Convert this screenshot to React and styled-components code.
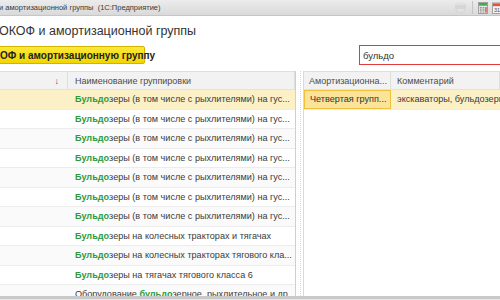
import React from "react";
import styled, { createGlobalStyle } from "styled-components";

const GlobalStyle = createGlobalStyle`
  html, body {
    margin: 0;
    padding: 0;
    width: 500px;
    height: 300px;
    overflow: hidden;
    background: #ffffff;
  }
  body {
    font-family: "Liberation Sans", Arial, sans-serif;
    color: #333;
  }
`;

const rows = [
  { rest: "зеры (в том числе с рыхлителями) на гус..." },
  { rest: "зеры (в том числе с рыхлителями) на гус..." },
  { rest: "зеры (в том числе с рыхлителями) на гус..." },
  { rest: "зеры (в том числе с рыхлителями) на гус..." },
  { rest: "зеры (в том числе с рыхлителями) на гус..." },
  { rest: "зеры (в том числе с рыхлителями) на гус..." },
  { rest: "зеры (в том числе с рыхлителями) на гус..." },
  { rest: "зеры на колесных тракторах и тягачах" },
  { rest: "зеры на колесных тракторах тягового кла..." },
  { rest: "зеры на тягачах тягового класса 6" },
  { pre: "Оборудование ", match: "бульдо", rest: "зерное, рыхлительное и др..." },
];

export default function App() {
  return (
    <>
      <GlobalStyle />
      <Window>
        <TitleBar>
          <span>и амортизационной группы&nbsp; (1С:Предприятие)</span>
          <TitleIcons>
            <svg width="13" height="11" viewBox="0 0 14 12">
              <rect x="1" y="2" width="12" height="6" rx="1" fill="#c9ccd0" />
              <rect x="3" y="0.5" width="8" height="3" fill="#dcdfe2" />
              <rect x="3" y="7" width="8" height="4" fill="#e4e6e8" stroke="#c2c5c9" strokeWidth="0.6" />
            </svg>
            <Divider />
            <svg width="10" height="12" viewBox="0 0 11 13">
              <rect x="0.5" y="0.5" width="10" height="12" fill="#e8e8e8" stroke="#9a9a9a" />
              <rect x="1" y="1" width="9" height="3" fill="#3fae49" />
              <g fill="#8a8a8a">
                <rect x="2" y="5.5" width="2" height="1.5" />
                <rect x="5" y="5.5" width="2" height="1.5" />
                <rect x="2" y="8" width="2" height="1.5" />
                <rect x="5" y="8" width="2" height="1.5" />
                <rect x="2" y="10.5" width="2" height="1" />
                <rect x="5" y="10.5" width="2" height="1" />
              </g>
              <rect x="8" y="5.5" width="1.5" height="6" fill="#d64545" />
            </svg>
            <svg width="10" height="12" viewBox="0 0 11 13">
              <rect x="0.5" y="1" width="10" height="11.5" fill="#f4f4f4" stroke="#9a9a9a" />
              <rect x="1" y="1.5" width="9" height="3" fill="#e0553a" />
              <text x="5.5" y="11" fontSize="6" textAnchor="middle" fill="#444" fontFamily="Liberation Sans, sans-serif">31</text>
            </svg>
          </TitleIcons>
        </TitleBar>

        <Form>
          <Heading>ОКОФ и амортизационной группы</Heading>
          <Toolbar>
            <PrimaryButton>ОФ и амортизационную группу</PrimaryButton>
            <SearchBox>бульдо</SearchBox>
          </Toolbar>

          <Panes>
            <LeftGrid>
              <HeaderRow>
                <HeadCell $w="68px" $align="flex-end">
                  <SortArrow>↓</SortArrow>
                </HeadCell>
                <HeadCell $grow>Наименование группировки</HeadCell>
              </HeaderRow>
              {rows.map((r, i) => (
                <Row key={i} $selected={i === 0} $alt={i % 2 === 1}>
                  <Cell $w="68px" />
                  <Cell $grow>
                    {r.pre}
                    <Match>{r.match || "Бульдо"}</Match>
                    {r.rest}
                  </Cell>
                </Row>
              ))}
            </LeftGrid>

            <Splitter />

            <RightGrid>
              <HeaderRow>
                <HeadCell $w="87px" $pad="5px">Амортизационна...</HeadCell>
                <HeadCell $grow $pad="6px">Комментарий</HeadCell>
              </HeaderRow>
              <Row $selected>
                <CurrentCell>Четвертая групп...</CurrentCell>
                <Cell $grow $pad="6px">экскаваторы, бульдозеры, грейдеры</Cell>
              </Row>
            </RightGrid>
          </Panes>
        </Form>
        <BottomEdge />
      </Window>
    </>
  );
}

const Window = styled.div`
  width: 500px;
  height: 300px;
  display: flex;
  flex-direction: column;
  overflow: hidden;
`;

const TitleBar = styled.div`
  height: 15px;
  flex-shrink: 0;
  display: flex;
  align-items: center;
  justify-content: space-between;
  background: linear-gradient(#ececec, #d9d9d9);
  border-bottom: 1px solid #c6c6c6;
  font-size: 7.5px;
  color: #3a3a3a;
  white-space: nowrap;
  span {
    margin-left: -1px;
  }
`;

const TitleIcons = styled.div`
  display: flex;
  align-items: center;
  gap: 4px;
  margin-right: -2px;
  svg:first-child {
    opacity: 0.55;
  }
`;

const Divider = styled.div`
  width: 1px;
  height: 13px;
  background: #c4c4c4;
  margin: 0 1px;
`;

const Form = styled.div`
  flex: 1;
  display: flex;
  flex-direction: column;
  min-height: 0;
`;

const Heading = styled.div`
  margin: 6px 0 0 -1px;
  height: 18px;
  font-size: 12.5px;
  line-height: 18px;
  color: #333;
  white-space: nowrap;
`;

const Toolbar = styled.div`
  margin-top: 5px;
  display: flex;
  justify-content: space-between;
  align-items: center;
  height: 20px;
`;

const PrimaryButton = styled.div`
  flex-shrink: 0;
  margin-left: -4px;
  width: 149px;
  height: 18px;
  box-sizing: border-box;
  display: flex;
  align-items: center;
  padding-left: 3px;
  background: linear-gradient(#fbe83a, #f2d500);
  border: 1px solid #d2b300;
  border-radius: 2px;
  font-size: 10px;
  font-weight: bold;
  color: #222;
  white-space: nowrap;
`;

const SearchBox = styled.div`
  flex-shrink: 0;
  width: 150px;
  height: 20px;
  box-sizing: border-box;
  margin-right: -9px;
  border: 1px solid #e03c3c;
  display: flex;
  align-items: center;
  padding-left: 3px;
  font-size: 9.5px;
  color: #333;
`;

const Panes = styled.div`
  margin-top: 6px;
  flex: 1;
  display: flex;
  min-height: 0;
`;

const LeftGrid = styled.div`
  width: 295px;
  flex-shrink: 0;
  border-right: 1px solid #cfcfcf;
  overflow: hidden;
`;

const Splitter = styled.div`
  width: 7px;
  flex-shrink: 0;
  background:
    linear-gradient(#d8d8d8 50%, transparent 50%) 4px 0 / 1px 2px repeat-y;
`;

const RightGrid = styled.div`
  flex: 1;
  border-left: 1px solid #dadada;
  overflow: hidden;
`;

const HeaderRow = styled.div`
  display: flex;
  height: 19px;
  background: #f2f2f2;
  border-top: 1px solid #dedede;
  border-bottom: 1px solid #e2e2e2;
  box-sizing: border-box;
`;

const HeadCell = styled.div`
  ${({ $w }) => ($w ? `width: ${$w}; flex-shrink: 0;` : "")}
  ${({ $grow }) => ($grow ? "flex: 1; min-width: 0;" : "")}
  display: flex;
  align-items: center;
  justify-content: ${({ $align }) => $align || "flex-start"};
  padding: 0 ${({ $pad }) => $pad || "7px"};
  box-sizing: border-box;
  border-right: 1px solid #dedede;
  font-size: 9px;
  color: #4d4d4d;
  white-space: nowrap;
  overflow: hidden;
`;

const SortArrow = styled.span`
  font-size: 9px;
  color: #555;
  margin-right: 1px;
`;

const Row = styled.div`
  display: flex;
  height: 19.5px;
  box-sizing: border-box;
  border-bottom: 1px solid #ececec;
  background: ${({ $selected, $alt }) =>
    $selected ? "#fcf1c6" : $alt ? "#ffffff" : "#fafafa"};
`;

const Cell = styled.div`
  ${({ $w }) => ($w ? `width: ${$w}; flex-shrink: 0;` : "")}
  ${({ $grow }) => ($grow ? "flex: 1; min-width: 0;" : "")}
  display: flex;
  align-items: center;
  padding: 0 ${({ $pad }) => $pad || "7px"};
  box-sizing: border-box;
  font-size: 9.1px;
  color: #3a3a3a;
  white-space: pre;
  overflow: hidden;
`;

const CurrentCell = styled.div`
  width: 87px;
  flex-shrink: 0;
  display: flex;
  align-items: center;
  padding: 0 5px;
  box-sizing: border-box;
  background: #fbe39a;
  border: 1px solid #f0c23c;
  font-size: 9.1px;
  color: #333;
  white-space: nowrap;
  overflow: hidden;
`;

const Match = styled.b`
  color: #2f9a3c;
`;

const BottomEdge = styled.div`
  height: 3px;
  flex-shrink: 0;
  background: #c9c9c9;
  border-bottom: 1px solid #e6e6e6;
`;
